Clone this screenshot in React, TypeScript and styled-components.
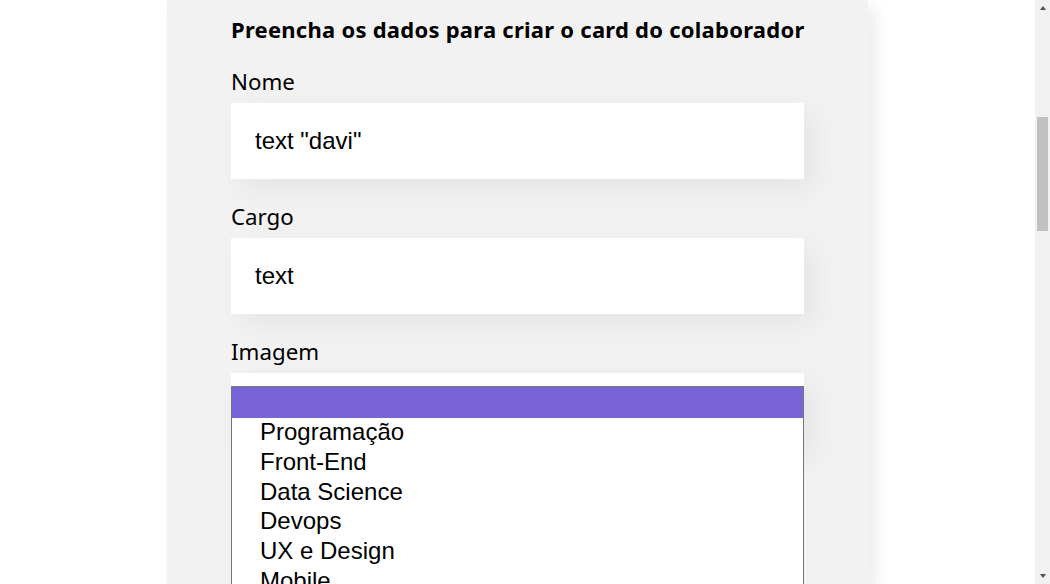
import React from "react";
import styled, { createGlobalStyle } from "styled-components";

const Global = createGlobalStyle`
  html, body { margin: 0; padding: 0; background: #ffffff; overflow: hidden; height: 100%; }
  #root { height: 100%; }
  * { box-sizing: border-box; }
`;

const Page = styled.div`
  width: calc(100% - 15px);
  height: 100%;
  display: flex;
  justify-content: center;
`;

const Form = styled.form`
  width: 701px;
  min-height: 100%;
  background: #f2f2f2;
  padding: 16px 64px 0;
  box-shadow: 8px 8px 16px rgba(0, 0, 0, 0.08);
  font-family: "Noto Sans", Lato, sans-serif;
  color: #000;
  display: flex;
  flex-direction: column;
`;

const Title = styled.h2`
  margin: 0 0 26px;
  font-size: 22px;
  letter-spacing: 0.25px;
  line-height: 26px;
  font-weight: 700;
  white-space: nowrap;
`;

const Field = styled.div`
  margin-bottom: 24px;
  position: relative;
  display: flex;
  flex-direction: column;
`;

const Label = styled.label`
  font-size: 22.3px;
  line-height: 27px;
  font-weight: 400;
  margin-bottom: 8px;
`;

const TextInput = styled.input`
  display: block;
  width: 100%;
  height: 76px;
  border: none;
  outline: none;
  background: #ffffff;
  padding: 24px;
  font-family: "Liberation Sans", Arial, sans-serif;
  font-size: 24px;
  color: #000;
  box-shadow: 10px 10px 30px rgba(0, 0, 0, 0.06);
`;

const SelectBox = styled.div`
  height: 76px;
  background: #ffffff;
  box-shadow: 10px 10px 30px rgba(0, 0, 0, 0.06);
`;

const Popup = styled.div`
  position: absolute;
  left: 0;
  top: 48px;
  width: 573px;
  background: #ffffff;
  border: 1px solid #767676;
  font-family: "Liberation Sans", Arial, sans-serif;
  font-size: 24px;
  color: #000;
  display: flex;
  flex-direction: column;
`;

const Option = styled.div<{ $active?: boolean }>`
  flex: none;
  height: ${(p) => (p.$active ? "31px" : "29.75px")};
  line-height: ${(p) => (p.$active ? "31px" : "28.5px")};
  padding-left: 28px;
  background: ${(p) => (p.$active ? "#7864d8" : "transparent")};
  white-space: nowrap;
`;

const Scrollbar = styled.div`
  position: fixed;
  top: 0;
  right: 0;
  width: 15px;
  height: 100%;
  background: #f1f1f1;
  display: flex;
  flex-direction: column;
  align-items: center;
  padding: 6px 0;
`;

const Arrow = styled.div<{ $down?: boolean }>`
  width: 0;
  height: 0;
  border-left: 3.5px solid transparent;
  border-right: 3.5px solid transparent;
  ${(p) => (p.$down ? "border-top: 4px solid #505050; margin-top: auto;" : "border-bottom: 4px solid #505050;")}
`;

const Thumb = styled.div`
  margin-top: 107px;
  width: 11px;
  height: 114px;
  background: #c1c1c1;
`;

const options = ["", "Programação", "Front-End", "Data Science", "Devops", "UX e Design", "Mobile", "Inovação e Gestão"];

export default function App() {
  return (
    <>
      <Global />
      <Page>
        <Form onSubmit={(e) => e.preventDefault()}>
          <Title>Preencha os dados para criar o card do colaborador</Title>
          <Field>
            <Label>Nome</Label>
            <TextInput readOnly value={'text "davi"'} />
          </Field>
          <Field>
            <Label>Cargo</Label>
            <TextInput readOnly value="text" />
          </Field>
          <Field>
            <Label>Imagem</Label>
            <SelectBox />
            <Popup role="listbox">
              {options.map((o, i) => (
                <Option key={i} $active={i === 0} role="option">
                  {o}
                </Option>
              ))}
            </Popup>
          </Field>
        </Form>
      </Page>
      <Scrollbar>
        <Arrow />
        <Thumb />
        <Arrow $down />
      </Scrollbar>
    </>
  );
}
